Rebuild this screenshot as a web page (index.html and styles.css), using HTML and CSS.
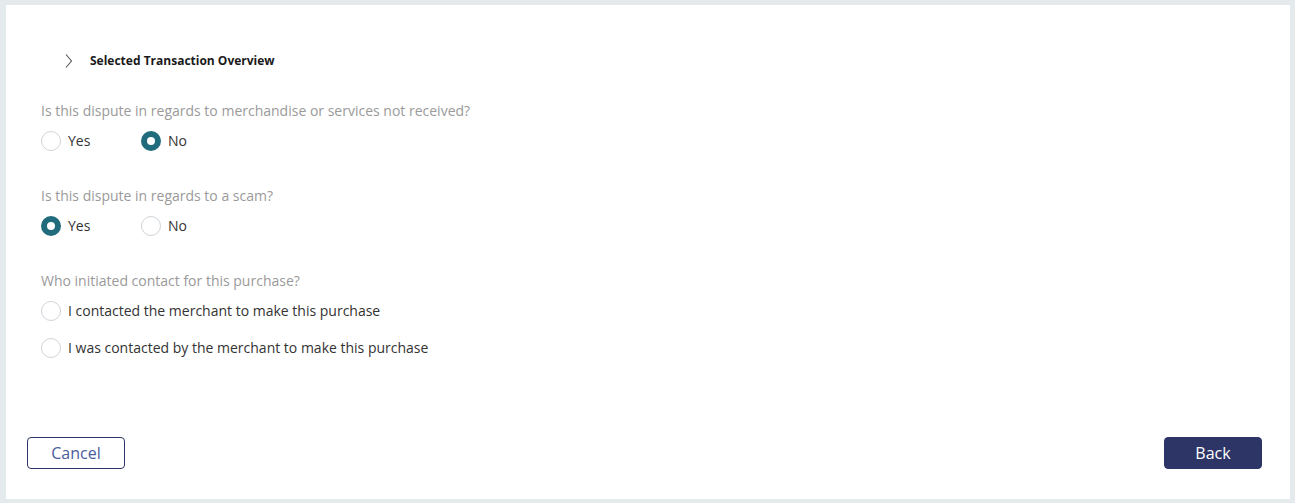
FILE: index.html
```html
<!DOCTYPE html>
<html lang="en">
<head>
<meta charset="utf-8">
<title>Dispute</title>
<link rel="stylesheet" href="styles.css">
</head>
<body>
<div class="card">
  <div class="overview">
    <svg class="chev" width="10" height="16" viewBox="0 0 10 16"><path d="M2 1.5 L7.5 8 L2 14.5" fill="none" stroke="#555" stroke-width="1.1"/></svg>
    <span class="overview-title">Selected Transaction Overview</span>
  </div>

  <div class="question q-first">
    <div class="q-label">Is this dispute in regards to merchandise or services not received?</div>
    <div class="options inline">
      <label class="opt"><span class="radio"></span><span class="opt-text">Yes</span></label>
      <label class="opt"><span class="radio checked"></span><span class="opt-text">No</span></label>
    </div>
  </div>

  <div class="question">
    <div class="q-label">Is this dispute in regards to a scam?</div>
    <div class="options inline">
      <label class="opt"><span class="radio checked"></span><span class="opt-text">Yes</span></label>
      <label class="opt"><span class="radio"></span><span class="opt-text">No</span></label>
    </div>
  </div>

  <div class="question">
    <div class="q-label">Who initiated contact for this purchase?</div>
    <div class="options stacked">
      <label class="opt"><span class="radio"></span><span class="opt-text">I contacted the merchant to make this purchase</span></label>
      <label class="opt"><span class="radio"></span><span class="opt-text">I was contacted by the merchant to make this purchase</span></label>
    </div>
  </div>

  <div class="footer">
    <button class="btn btn-outline">Cancel</button>
    <button class="btn btn-solid">Back</button>
  </div>
</div>
</body>
</html>
```

FILE: styles.css
```css
html, body {
  margin: 0;
  padding: 0;
}
body {
  background: #e5eaed;
  font-family: "Open Sans", "Liberation Sans", Arial, sans-serif;
  color: #333;
  height: 503px;
  box-sizing: border-box;
  padding: 5px 5px 4px 6px;
  display: flex;
}
.card {
  flex: 1;
  background: #fff;
  display: flex;
  flex-direction: column;
  padding: 48px 28px 30px 35px;
}
.overview {
  display: flex;
  align-items: center;
  height: 16px;
  padding-left: 23px;
}
.chev {
  display: block;
}
.overview-title {
  margin-left: 16px;
  font-size: 12px;
  font-weight: 700;
  color: #1a1a1a;
  line-height: 16px;
}
.question {
  margin-top: 35px;
}
.question.q-first {
  margin-top: 32px;
}
.q-label {
  font-size: 14px;
  line-height: 20px;
  color: #9a9a9a;
}
.options {
  margin-top: 10px;
  display: flex;
}
.options.inline .opt {
  width: 100px;
}
.options.stacked {
  flex-direction: column;
  gap: 17px;
}
.opt {
  display: flex;
  align-items: center;
  height: 20px;
  font-size: 14px;
  color: #333;
}
.radio {
  width: 20px;
  height: 20px;
  box-sizing: border-box;
  border: 1px solid #cfd4d9;
  border-radius: 50%;
  background: #fff;
  flex: none;
}
.radio.checked {
  border: 6.5px solid #216c7c;
  background: #fff;
}
.opt-text {
  margin-left: 7px;
  line-height: 20px;
}
.footer {
  margin-top: auto;
  display: flex;
  justify-content: space-between;
  margin-left: -14px;
}
.btn {
  width: 98px;
  height: 32px;
  border-radius: 4px;
  font-family: "Open Sans", "Liberation Sans", Arial, sans-serif;
  font-size: 16px;
  cursor: pointer;
  padding: 0;
}
.btn-outline {
  background: #fff;
  border: 1px solid #2c3566;
  color: #4a5c9c;
}
.btn-solid {
  background: #2c3566;
  border: 1px solid #2c3566;
  color: #fff;
}
```
